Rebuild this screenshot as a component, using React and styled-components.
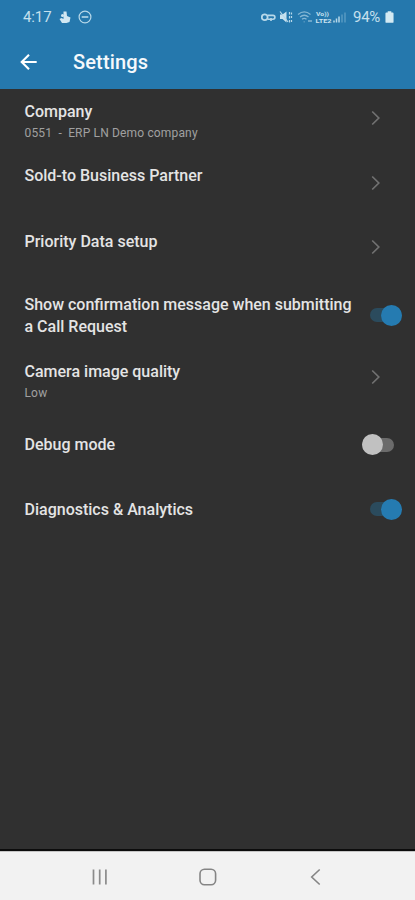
import React from "react";
import styled, { createGlobalStyle } from "styled-components";

const settings = [
  { title: "Company", note: "0551  -  ERP LN Demo company", type: "link", height: 61, top: 11.5, control: 29 },
  { title: "Sold-to Business Partner", type: "link", height: 65, top: 15, control: 32.5 },
  { title: "Priority Data setup", type: "link", height: 65, top: 16, control: 32 },
  {
    title: "Show confirmation message when submitting a Call Request",
    type: "switch",
    on: true,
    height: 65,
    top: 14,
    control: 35
  },
  { title: "Camera image quality", note: "Low", type: "link", height: 66, top: 15.5, control: 32 },
  { title: "Debug mode", type: "switch", on: false, height: 65, top: 23, control: 33.5 },
  { title: "Diagnostics & Analytics", type: "switch", on: true, height: 65, top: 23, control: 33 }
];

const SettingRow = ({ item }) => (
  <Row $height={item.height}>
    <RowText $top={item.top}>
      <RowTitle>{item.title}</RowTitle>
      {item.note && <RowNote>{item.note}</RowNote>}
    </RowText>
    {item.type === "link" ? (
      <Chevron $center={item.control} viewBox="0 0 10 16">
        <path d="M1.2 1.5 7.8 8l-6.6 6.5" />
      </Chevron>
    ) : (
      <Switch $center={item.control} $on={item.on} role="switch" aria-checked={item.on}>
        <Knob $on={item.on} />
      </Switch>
    )}
  </Row>
);

const StatusIcons = () => (
  <svg width="86" height="16" viewBox="0 0 86 16" fill="none" stroke="#b7d8e9">
    {/* vpn key */}
    <circle cx="3.7" cy="8.3" r="2.9" strokeWidth="1.8" />
    <path d="M6.500 6.400h5.500a1.900 1.900 0 0 1 0 3.800H7M10 9v3" strokeWidth="1.600" />
    {/* muted */}
    <path d="M19 5.500h2.500l4-3v11l-4-3.500H19z" fill="#c9e2ef" stroke="none" />
    <path d="m19 2.500 8 10.500M28.500 3v2.500M28.500 7v2.500M28.500 11v2.500M30.500 3.500v2M30.500 7v2M30.500 11v2" strokeWidth="1.200" />
    {/* wifi */}
    <g strokeWidth="1.300" opacity="0.65">
      <path d="M37 5.500c4-3.300 8.500-3.300 12.500 0M39 8c2.700-2.200 5.800-2.200 8.500 0M41 10.300c1.500-1.200 3-1.200 4.500 0" />
      <path d="M43.200 12.500v.8M47 12h4" />
    </g>
    {/* signal */}
    <path d="M73 11.500v2M75.500 9.500v4M78 7.500v6" strokeWidth="1.500" />
    <path d="M81 5.500v8M84 3.500v10" strokeWidth="1.300" opacity="0.4" />
    <g fill="#c9e2ef" stroke="none" fontSize="6" fontWeight="700">
      <text x="55" y="7" textLength="13" lengthAdjust="spacingAndGlyphs">Vo))</text>
      <text x="54.500" y="14.200" textLength="16" lengthAdjust="spacingAndGlyphs">LTE2</text>
    </g>
  </svg>
);

const App = () => (
  <Screen>
    <GlobalStyle />
    <StatusBar>
      <Clock>4:17</Clock>
      <LeftIcons>
        <svg width="12" height="14" viewBox="0 0 12 14" fill="#d1e7f2">
          <path d="M4.500 1.500h3L8 6l3.500 1.500-1 4.500-3 1H3L.5 9l2-1 2 1z" />
          <circle cx="3.500" cy="5.500" r="1.500" />
        </svg>
        <svg width="14" height="14" viewBox="0 0 14 14" fill="none" stroke="#b7d8e9" strokeWidth="1.200">
          <circle cx="7" cy="7" r="5.900" />
          <path d="M3.700 7h6.600" strokeWidth="1.600" />
        </svg>
      </LeftIcons>
      <RightIcons>
        <StatusIcons />
        <Battery>94%</Battery>
        <svg width="9" height="12" viewBox="0 0 10 13" fill="#d3eaf3">
          <path d="M3 0h4v1.500h1.500a1 1 0 0 1 1 1V12a1 1 0 0 1-1 1h-7a1 1 0 0 1-1-1V2.500a1 1 0 0 1 1-1H3z" />
        </svg>
      </RightIcons>
    </StatusBar>
    <Header>
      <BackButton aria-label="Back">
        <svg width="18" height="18" viewBox="0 0 18 18" fill="none" stroke="#fff" strokeWidth="2.100">
          <path d="M16.700 9H2M9 1.700 1.700 9 9 16.300" />
        </svg>
      </BackButton>
      <HeaderTitle>Settings</HeaderTitle>
    </Header>
    <List>
      {settings.map(item => (
        <SettingRow key={item.title} item={item} />
      ))}
    </List>
    <NavBar>
      <NavButton aria-label="Recents">
        <svg width="18" height="18" viewBox="0 0 18 18" stroke="#8b8b8b" strokeWidth="1.700">
          <path d="M2.500 1.500v15M8.700 1.500v15M14.900 1.500v15" />
        </svg>
      </NavButton>
      <NavButton aria-label="Home">
        <svg width="18" height="18" viewBox="0 0 18 18" fill="none" stroke="#858585" strokeWidth="1.600">
          <rect x="1" y="1.200" width="15.600" height="15.600" rx="4.500" />
        </svg>
      </NavButton>
      <NavButton aria-label="Back">
        <svg width="18" height="18" viewBox="0 0 18 18" fill="none" stroke="#858585" strokeWidth="1.600">
          <path d="M12.700 1.500 4.700 9l8 7.500" />
        </svg>
      </NavButton>
    </NavBar>
  </Screen>
);

const GlobalStyle = createGlobalStyle`
  body {
    margin: 0;
    background: #303030;
    font-family: Roboto, sans-serif;
  }

  * {
    box-sizing: border-box;
  }
`;

const Screen = styled.div`
  display: flex;
  flex-direction: column;
  height: 900px;
  background: #303030;
`;

const StatusBar = styled.div`
  display: flex;
  align-items: center;
  height: 34px;
  padding: 0 21px 0 23px;
  background: #2578ad;
  color: #c6e0ed;
`;

const Clock = styled.span`
  width: 36px;
  font-size: 15px;
  letter-spacing: -0.1px;
`;

const LeftIcons = styled.div`
  display: flex;
  align-items: center;
  gap: 7px;
`;

const RightIcons = styled.div`
  display: flex;
  align-items: center;
  margin-left: auto;
`;

const Battery = styled.span`
  width: 31px;
  margin: 0 1px 0 6px;
  font-size: 15px;
  letter-spacing: -0.3px;
`;

const Header = styled.header`
  display: flex;
  align-items: center;
  height: 55px;
  padding-left: 20px;
  background: #2578ad;
`;

const BackButton = styled.button`
  display: flex;
  width: 53px;
  padding: 0;
  border: none;
  background: none;
`;

const HeaderTitle = styled.h1`
  margin: 0;
  font-size: 20px;
  font-weight: 500;
  letter-spacing: 0.15px;
  color: #f5f9fc;
`;

const List = styled.main`
  flex: 1;
  border-bottom: 2px solid #0c0c0c;
`;

const Row = styled.div`
  display: flex;
  align-items: flex-start;
  height: ${({ $height }) => $height}px;
  padding: 0 13px 0 24.5px;
`;

const RowText = styled.div`
  flex: 1;
  padding-top: ${({ $top }) => $top}px;
`;

const RowTitle = styled.div`
  width: 332px;
  font-size: 16px;
  font-weight: 500;
  line-height: 22px;
  color: #e4e4e4;
`;

const RowNote = styled.div`
  font-size: 12px;
  letter-spacing: 0.16px;
  line-height: 20px;
  white-space: pre;
  color: #a0a0a0;
`;

const Chevron = styled.svg`
  width: 10px;
  height: 16px;
  margin: ${({ $center }) => $center - 8}px 21.5px 0 0;
  fill: none;
  stroke: #717171;
  stroke-width: 1.7;
`;

const Switch = styled.div`
  display: flex;
  align-items: center;
  justify-content: ${({ $on }) => ($on ? "flex-end" : "flex-start")};
  width: 32px;
  height: 14px;
  margin: ${({ $center, $on }) => `${$center - 7}px ${$on ? 0 : 8}px 0 0`};
  border-radius: 7px;
  background: ${({ $on }) => ($on ? "#2b4b5d" : "#6b6b6b")};
`;

const Knob = styled.span`
  flex: none;
  width: 21px;
  height: 21px;
  border-radius: 50%;
  background: ${({ $on }) => ($on ? "#257bb1" : "#c1c1c1")};
`;

const NavBar = styled.nav`
  display: flex;
  align-items: center;
  justify-content: center;
  gap: 90px;
  height: 49px;
  padding-top: 1px;
  border-top: 1px solid #c5c5c5;
  background: #f2f2f2;
`;

const NavButton = styled.button`
  display: flex;
  padding: 0;
  border: none;
  background: none;
`;

export default App;
